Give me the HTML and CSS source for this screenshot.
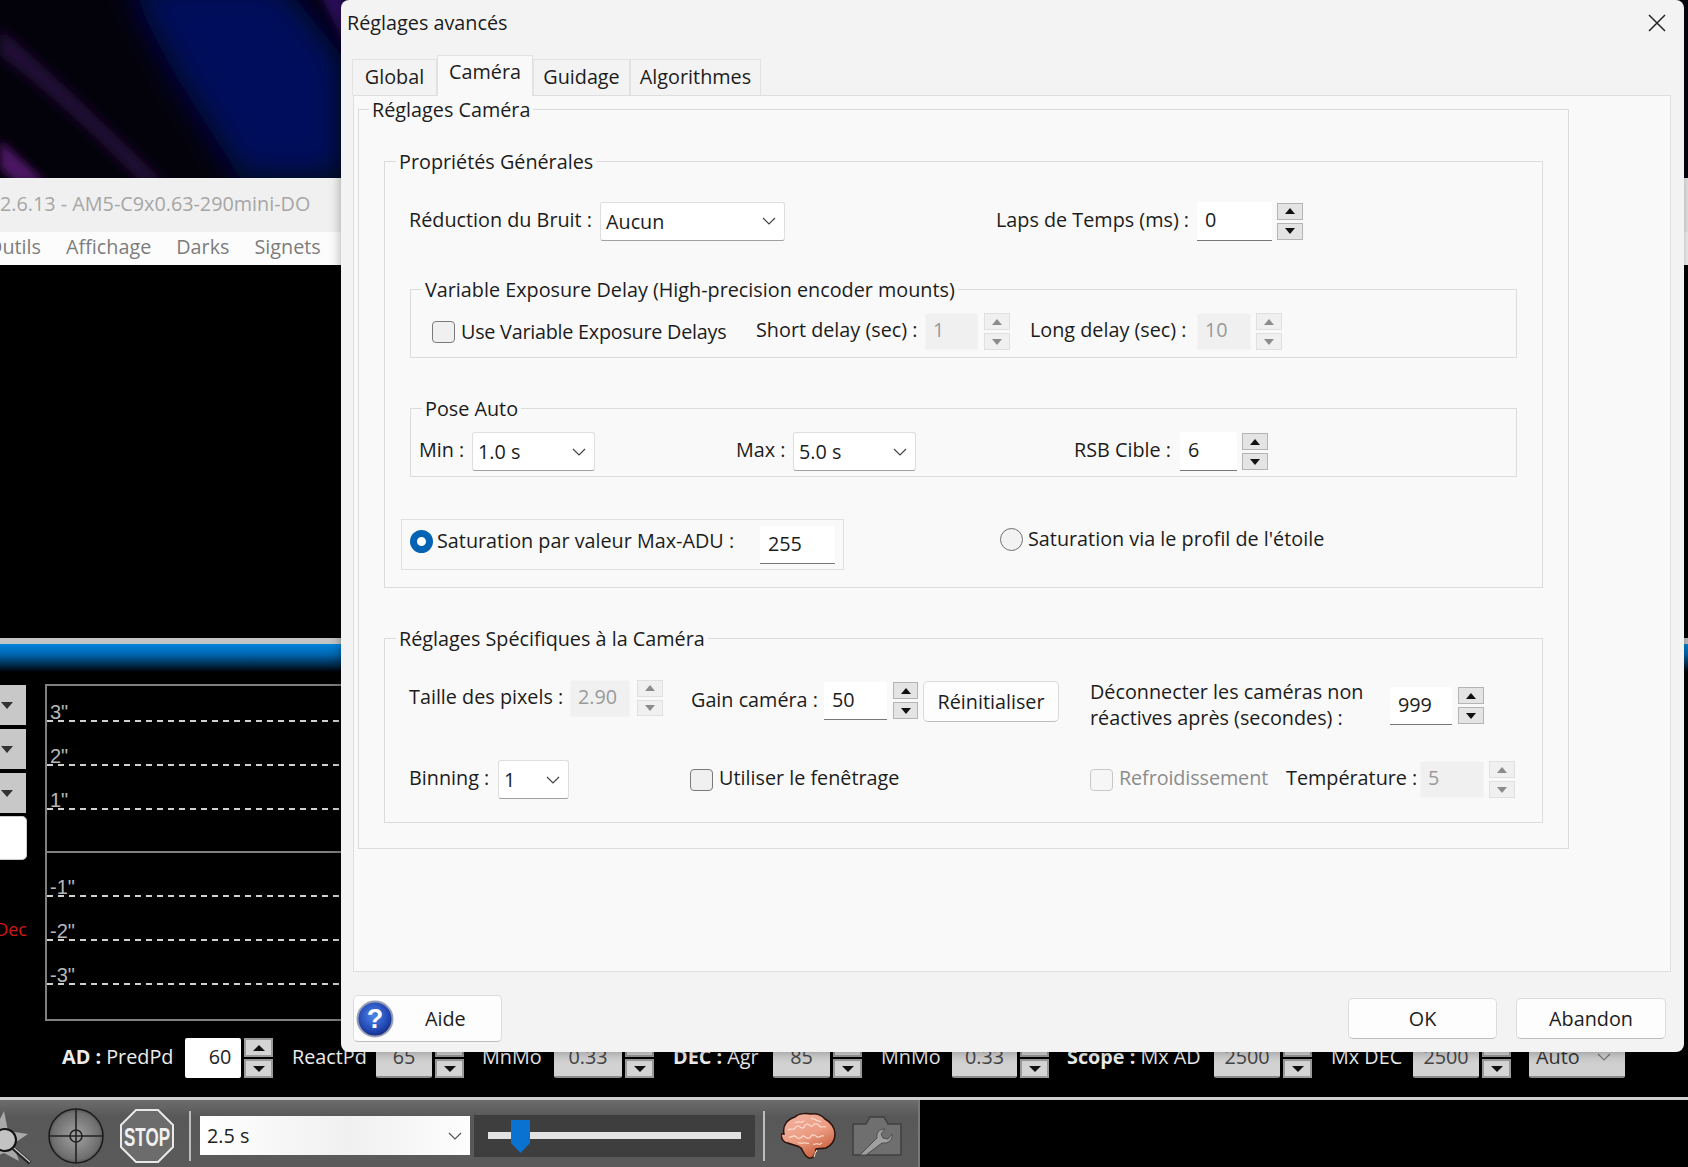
FILE: index.html
```html
<!DOCTYPE html>
<html lang="fr">
<head>
<meta charset="utf-8">
<title>Réglages avancés</title>
<link rel="stylesheet" href="styles.css">
</head>
<body>
<div class="desktop">
  <svg class="wallpaper" viewBox="0 0 345 178" preserveAspectRatio="none" aria-hidden="true">
    <defs>
      <filter id="b1" x="-30%" y="-30%" width="160%" height="160%"><feGaussianBlur stdDeviation="16"/></filter>
      <filter id="b2" x="-30%" y="-30%" width="160%" height="160%"><feGaussianBlur stdDeviation="6"/></filter>
      <filter id="b3" x="-30%" y="-30%" width="160%" height="160%"><feGaussianBlur stdDeviation="4"/></filter>
    </defs>
    <rect width="345" height="178" fill="#03020a"/>
    <path d="M130 -20 L280 -20 L345 60 L345 178 L240 178 C200 110 160 60 130 -20Z" fill="#030f5c" filter="url(#b1)"/>
    <path d="M318 -10 L345 -10 L350 40 L345 45Z" fill="#2a0a5a" filter="url(#b3)"/>
    <path d="M0 28 C50 70 110 130 165 182 L140 182 C90 130 40 85 0 56Z" fill="#220a38" filter="url(#b2)"/>
    <path d="M0 140 L46 182 L16 182 L0 168Z" fill="#4c1264" filter="url(#b3)"/>
  </svg>

  <div class="app">
    <div class="app-title">2.6.13 - AM5-C9x0.63-290mini-DO</div>
    <div class="app-menu"><span class="menu-first">Outils</span><span>Affichage</span><span>Darks</span><span>Signets</span></div>
    <div class="imagearea"></div>
    <div class="stripe"></div>
    <div class="blueband"></div>
    <div class="guider">
      <div class="sidectl">
        <div class="sidebtn"><i class="tri-down"></i></div>
        <div class="sidebtn"><i class="tri-down"></i></div>
        <div class="sidebtn"><i class="tri-down"></i></div>
        <div class="sidewhite"></div>
        <div class="dec">Dec</div>
      </div>
      <div class="graph">
        <div class="band b37 dashed"><span>3"</span></div>
        <div class="band b44 dashed"><span>2"</span></div>
        <div class="band b44 dashed"><span>1"</span></div>
        <div class="band b43 solid"></div>
        <div class="band b44 dashed"><span>-1"</span></div>
        <div class="band b44 dashed"><span>-2"</span></div>
        <div class="band b44 dashed"><span>-3"</span></div>
        <div class="band b36"></div>
      </div>
    </div>
    <div class="params">
      <span class="p-lab p-ad"><b>AD :</b> PredPd</span>
      <div class="p-field p-white p-60">60</div>
      <div class="p-spin"><i class="tri-up"></i><i class="tri-down"></i></div>
      <span class="p-lab p-react">ReactPd</span>
      <div class="p-field p-65">65</div>
      <div class="p-spin"><i class="tri-up"></i><i class="tri-down"></i></div>
      <span class="p-lab p-mn1">MnMo</span>
      <div class="p-field p-033">0.33</div>
      <div class="p-spin"><i class="tri-up"></i><i class="tri-down"></i></div>
      <span class="p-lab p-dec"><b>DEC :</b> Agr</span>
      <div class="p-field p-85">85</div>
      <div class="p-spin"><i class="tri-up"></i><i class="tri-down"></i></div>
      <span class="p-lab p-mn2">MnMo</span>
      <div class="p-field p-033b">0.33</div>
      <div class="p-spin"><i class="tri-up"></i><i class="tri-down"></i></div>
      <span class="p-lab p-scope"><b>Scope :</b> Mx AD</span>
      <div class="p-field p-2500">2500</div>
      <div class="p-spin"><i class="tri-up"></i><i class="tri-down"></i></div>
      <span class="p-lab p-mxdec">Mx DEC</span>
      <div class="p-field p-2500b">2500</div>
      <div class="p-spin"><i class="tri-up"></i><i class="tri-down"></i></div>
      <div class="p-auto">Auto<svg class="chev" viewBox="0 0 14 8"><path d="M1 1l6 6 6-6" fill="none" stroke="#777" stroke-width="1.2"/></svg></div>
    </div>
    <div class="sepline"></div>
    <div class="toolbar-row">
      <div class="toolbar">
        <svg class="ic-loop" viewBox="0 0 33 58" aria-hidden="true">
          <path d="M4 4l4 20 20 3-15 10 6 17-15-8-8 3V20z" fill="#a9a9a9"/>
          <circle cx="5" cy="33" r="11" fill="#d8d8d8" fill-opacity=".55" stroke="#111" stroke-width="2"/>
          <path d="M13 41l17 15" stroke="#222" stroke-width="4"/><path d="M14 41l16 14" stroke="#cfcfcf" stroke-width="1.2"/>
        </svg>
        <svg class="ic-guide" viewBox="0 0 56 56" aria-hidden="true">
          <defs><radialGradient id="gd" cx=".5" cy=".5" r=".55"><stop offset="0" stop-color="#a2a2a2"/><stop offset=".8" stop-color="#6e6e6e"/><stop offset="1" stop-color="#3e3e3e"/></radialGradient></defs>
          <circle cx="28" cy="28" r="27" fill="url(#gd)" stroke="#1c1c1c" stroke-width="1.5"/>
          <path d="M28 1v54M1 28h54" stroke="#222" stroke-width="1.6"/>
          <circle cx="28" cy="28" r="6" fill="none" stroke="#222" stroke-width="1.6"/>
        </svg>
        <svg class="ic-stop" viewBox="0 0 54 54" aria-hidden="true">
          <path d="M16 1h22l15 15v22L38 53H16L1 38V16z" fill="#6c6c6c" stroke="#e8e8e8" stroke-width="2"/>
          <text x="27" y="37" text-anchor="middle" class="stop-text" textLength="46" lengthAdjust="spacingAndGlyphs">STOP</text>
        </svg>
        <div class="tb-sep tb-sep1"></div>
        <div class="tb-select">2.5 s<svg class="chev" viewBox="0 0 14 8"><path d="M1 1l6 6 6-6" fill="none" stroke="#555" stroke-width="1.2"/></svg></div>
        <div class="slider">
          <div class="track"></div>
          <svg class="thumb" viewBox="0 0 19 33" aria-hidden="true"><path d="M1 0h17a1 1 0 0 1 1 1v22l-9.500 10L0 23V1a1 1 0 0 1 1-1z" fill="#0a72d0"/></svg>
        </div>
        <div class="tb-sep tb-sep2"></div>
        <svg class="ic-brain" viewBox="0 0 55 47" aria-hidden="true">
          <defs><linearGradient id="br" x1="0" y1="0" x2=".6" y2="1"><stop offset="0" stop-color="#f4b7a6"/><stop offset=".6" stop-color="#ea9a80"/><stop offset="1" stop-color="#c9603c"/></linearGradient></defs>
          <path d="M3 22C1 13 7 7 14 5c4-4 12-4 16-3 5-1 11 1 14 5 6 3 10 9 10 15 0 7-3 11-9 14-4 1-8 0-10 1 0 3-1 6-3 8-2 2-5 1-7-1-2-2-3-5-5-8-4-3-9-3-13-5-4 0-7-4-7-9z" fill="url(#br)" stroke="#2a120c" stroke-width="1.500"/>
          <path d="M7 18c2-2 4 0 6-1s1-3 4-3 2 3 5 2 1-4 4-4 3 3 5 2 2-3 5-2 2 3 4 3 3-1 5 0M8 25c2 1 4-2 6-1s2 3 5 2 2-3 4-2 2 3 5 2 2-4 5-3 3 3 5 2 3-2 5-1M14 10c2 1 3-1 5 0s3-1 4-1M30 6c2 2 3 0 5 2s3 0 5 2M17 31c2-1 3 1 5 0s3 1 6 0M32 32c2 1 3-1 5 0s2 0 4-1M36 38c-1 2-2 3-2 4s-1 2-1 3" fill="none" stroke="#fde3d6" stroke-width="1.100"/>
        </svg>
        <svg class="ic-cam" viewBox="0 0 50 40" aria-hidden="true">
          <path d="M1 8h13l4-7h14l4 7h13v31H1z" fill="#6f6f6f" stroke="#3f3f3f" stroke-width="1.500"/>
          <path d="M8 39l17-17c-1-5 2-9 8-9l-4 5 2 4 5 1 4-5c1 6-4 10-10 9L14 39z" fill="#a0a0a0" stroke="#4c4c4c"/>
        </svg>
      </div>
    </div>
  </div>

  <div class="dialog">
    <div class="dlg-title">
      <span>Réglages avancés</span>
      <svg class="dlg-close" viewBox="0 0 18 18" aria-hidden="true"><path d="M1 1l16 16M17 1L1 17" stroke="#222" stroke-width="1.500" fill="none"/></svg>
    </div>
    <div class="tabs">
      <div class="tab tab-global">Global</div>
      <div class="tab tab-on">Caméra</div>
      <div class="tab tab-guide">Guidage</div>
      <div class="tab tab-algo">Algorithmes</div>
    </div>
    <div class="pane">
      <fieldset class="grp grp-outer">
        <legend>Réglages Caméra</legend>

        <fieldset class="grp grp-gen">
          <legend>Propriétés Générales</legend>
          <div class="row row-noise">
            <span class="lab w-noise">Réduction du Bruit :</span>
            <div class="combo c-noise">Aucun<svg class="chev" viewBox="0 0 14 8"><path d="M1 1l6 6 6-6"/></svg></div>
            <span class="lab w-laps">Laps de Temps (ms) :</span>
            <div class="field f-laps">0</div>
            <div class="spin s-ml5"><i class="tri-up"></i><i class="tri-down"></i></div>
          </div>

          <fieldset class="grp grp-sub grp-var">
            <legend>Variable Exposure Delay (High-precision encoder mounts)</legend>
            <div class="row row-var">
              <div class="check w-usevar"><i class="box"></i><span>Use Variable Exposure Delays</span></div>
              <span class="lab w-short">Short delay (sec) :</span>
              <div class="field off f-short">1</div>
              <div class="spin off s-ml6"><i class="tri-up"></i><i class="tri-down"></i></div>
              <span class="lab w-long">Long delay (sec) :</span>
              <div class="field off f-long">10</div>
              <div class="spin off s-ml5"><i class="tri-up"></i><i class="tri-down"></i></div>
            </div>
          </fieldset>

          <fieldset class="grp grp-sub grp-pose">
            <legend>Pose Auto</legend>
            <div class="row row-pose">
              <span class="lab w-min">Min :</span>
              <div class="combo c-pose">1.0 s<svg class="chev" viewBox="0 0 14 8"><path d="M1 1l6 6 6-6"/></svg></div>
              <span class="lab w-max">Max :</span>
              <div class="combo c-pose">5.0 s<svg class="chev" viewBox="0 0 14 8"><path d="M1 1l6 6 6-6"/></svg></div>
              <span class="lab w-rsb">RSB Cible :</span>
              <div class="field f-rsb">6</div>
              <div class="spin s-ml5"><i class="tri-up"></i><i class="tri-down"></i></div>
            </div>
          </fieldset>

          <div class="row row-sat">
            <div class="satbox">
              <i class="radio on"></i>
              <span class="lab w-sat">Saturation par valeur Max-ADU :</span>
              <div class="field f-sat">255</div>
            </div>
            <div class="sat2"><i class="radio"></i><span class="lab">Saturation via le profil de l'étoile</span></div>
          </div>
        </fieldset>

        <fieldset class="grp grp-spec">
          <legend>Réglages Spécifiques à la Caméra</legend>
          <div class="row row-a">
            <span class="lab w-taille">Taille des pixels :</span>
            <div class="field off f-taille">2.90</div>
            <div class="spin off s-taille"><i class="tri-up"></i><i class="tri-down"></i></div>
            <span class="lab w-gain">Gain caméra :</span>
            <div class="field f-gain">50</div>
            <div class="spin s-gain"><i class="tri-up"></i><i class="tri-down"></i></div>
            <div class="btn b-reinit">Réinitialiser</div>
            <span class="lab w-deco">Déconnecter les caméras non<br>réactives après (secondes) :</span>
            <div class="field f-deco">999</div>
            <div class="spin s-deco"><i class="tri-up"></i><i class="tri-down"></i></div>
          </div>
          <div class="row row-b">
            <span class="lab w-bin">Binning :</span>
            <div class="combo c-bin">1<svg class="chev" viewBox="0 0 14 8"><path d="M1 1l6 6 6-6"/></svg></div>
            <div class="check w-fen"><i class="box"></i><span>Utiliser le fenêtrage</span></div>
            <div class="check off w-ref"><i class="box"></i><span>Refroidissement</span></div>
            <span class="lab w-temp">Température :</span>
            <div class="field off f-temp">5</div>
            <div class="spin off s-ml5 s-temp"><i class="tri-up"></i><i class="tri-down"></i></div>
          </div>
        </fieldset>
      </fieldset>
    </div>
    <div class="dlg-foot">
      <div class="btn b-aide">
        <svg class="ic-help" viewBox="0 0 38 38" aria-hidden="true">
          <defs><radialGradient id="hp" cx=".45" cy=".4" r=".65"><stop offset="0" stop-color="#4f86ea"/><stop offset=".7" stop-color="#1f44b0"/><stop offset="1" stop-color="#16246a"/></radialGradient></defs>
          <circle cx="19" cy="19" r="17.500" fill="url(#hp)" stroke="#9aa0b4" stroke-width="2"/>
          <text x="19" y="28" text-anchor="middle" class="help-text">?</text>
        </svg>
        <span class="aide-text">Aide</span>
      </div>
      <div class="btn b-ok">OK</div>
      <div class="btn b-cancel">Abandon</div>
    </div>
  </div>
</div>
</body>
</html>
```

FILE: styles.css
```css
* { box-sizing: border-box; }
html, body { margin: 0; padding: 0; background: #000; }
body { font-family: "Open Sans", "Noto Sans", sans-serif; font-size: 19.8px; color: #1c1c1c; }
i { display: block; }

.desktop { position: relative; width: 1688px; height: 1167px; overflow: hidden; background: #05030c; }
.wallpaper { position: absolute; left: 0; top: 0; width: 345px; height: 178px; display: block; }

/* background application window */
.app { position: absolute; left: 0; top: 178px; width: 1688px; height: 989px; display: flex; flex-direction: column; background: #000; }
.app-title { height: 54px; line-height: 52px; background: #f0f0f0; color: #a6a6a6; white-space: nowrap; overflow: hidden; }
.app-menu { height: 33px; line-height: 30px; background: #fcfcfc; color: #7c7c7c; display: flex; gap: 25px; overflow: hidden; white-space: nowrap; }
.menu-first { margin-left: -13px; }
.imagearea { height: 373px; background: #000; flex: none; }
.stripe { height: 6px; background: #c4c4c4; flex: none; }
.blueband { height: 28px; flex: none; background: linear-gradient(#0084dc, #0069b4 35%, #001a30 85%, #000); }

.guider { display: flex; padding-top: 12px; flex: none; height: 349px; }
.sidectl { width: 45px; flex: none; display: flex; flex-direction: column; overflow: hidden; }
.sidebtn { width: 26px; height: 40px; background: #c8c8c8; margin: 1px 0 3px; display: flex; align-items: center; padding-left: 1px; }
.sidewhite { width: 27px; height: 44px; background: #fff; border: 1px solid #ccc; border-left: 0; border-radius: 0 5px 5px 0; }
.dec { width: 27px; margin-top: 57px; color: #d01818; font-size: 18px; line-height: 24px; display: flex; justify-content: flex-end; overflow: hidden; }
.graph { width: 400px; height: 337px; border: solid #808080; border-width: 2px 0 2px 2px; display: flex; flex-direction: column; flex: none; }
.band { flex: none; display: flex; align-items: flex-end; padding-left: 3px; color: #b8b8b8; font-family: "Liberation Sans", sans-serif; font-size: 20px; line-height: 22px; }
.band span { margin-bottom: -1px; }
.dashed { background: repeating-linear-gradient(90deg, #d0d0d0 0 6px, transparent 6px 11px) left bottom / 100% 2px no-repeat; }
.solid { border-bottom: 2px solid #808080; }
.b37 { height: 36px; } .b44 { height: 44px; } .b43 { height: 43px; } .b36 { height: 35px; }

.params { height: 76px; padding-top: 17px; flex: none; display: flex; align-items: flex-start; color: #ececec; white-space: nowrap; }
.p-lab { line-height: 38px; flex: none; }
.p-lab b { font-weight: 700; }
.p-field { height: 40px; line-height: 38px; background: #d2d2d2; color: #444; text-align: center; flex: none; border-radius: 2px; border-bottom: 2px solid #8a8a8a; }
.p-white { background: #fff; color: #222; border: 0; }
.p-spin { width: 29px; height: 40px; margin-left: 3px; display: flex; flex-direction: column; gap: 2px; flex: none; }
.p-spin i { height: 19px; background: #d4d4d4; border: 2px solid #9a9a9a; display: flex; align-items: center; justify-content: center; }
.p-ad { margin-left: 62px; width: 123px; }
.p-60 { width: 56px; padding-left: 14px; }
.p-react { margin-left: 19px; width: 84px; }
.p-65 { width: 56px; }
.p-mn1 { margin-left: 18px; width: 72px; }
.p-033 { width: 68px; }
.p-dec { margin-left: 19px; width: 100px; }
.p-85 { width: 57px; }
.p-mn2 { margin-left: 19px; width: 71px; }
.p-033b { width: 65px; }
.p-scope { margin-left: 18px; width: 147px; }
.p-2500 { width: 66px; }
.p-mxdec { margin-left: 19px; width: 82px; }
.p-2500b { width: 66px; }
.p-auto { margin-left: 18px; width: 96px; height: 40px; line-height: 38px; padding-left: 7px; background: #d0d0d0; color: #333; border-bottom: 2px solid #8a8a8a; border-radius: 2px; display: flex; justify-content: space-between; align-items: center; flex: none; }
.p-auto .chev { margin-right: 14px; }

.sepline { height: 3px; background: #cfcfcf; flex: none; }
.toolbar-row { flex: 1; display: flex; }
.toolbar { width: 920px; border-right: 2px solid #777; padding-top: 4px; background: linear-gradient(#6c6c6c, #585858 25%, #5a5a5a); display: flex; align-items: center; flex: none; }
.ic-loop { width: 33px; height: 58px; flex: none; }
.ic-guide { width: 56px; height: 56px; margin-left: 15px; flex: none; }
.ic-stop { width: 54px; height: 54px; margin-left: 16px; flex: none; }
.stop-text { font-family: "Liberation Sans", sans-serif; font-weight: 700; font-size: 26px; fill: #f0f0f0; }
.tb-sep { width: 2px; height: 50px; background: #bdbdbd; flex: none; }
.tb-sep1 { margin-left: 15px; }
.tb-select { width: 270px; height: 39px; margin-left: 9px; padding-left: 7px; line-height: 37px; background: linear-gradient(90deg, #fff, #f0f0f0 55%, #fdfdfd); color: #222; display: flex; justify-content: space-between; align-items: center; flex: none; }
.tb-select .chev { margin-right: 8px; }
.slider { width: 281px; height: 42px; margin-left: 4px; background: #3e3e3e; display: flex; align-items: center; padding-left: 14px; flex: none; position: relative; }
.track { width: 253px; height: 7px; background: #e2e2e2; }
.thumb { position: absolute; left: 37px; top: 5px; width: 19px; height: 33px; }
.tb-sep2 { margin-left: 8px; }
.ic-brain { width: 55px; height: 47px; margin-left: 16px; flex: none; }
.ic-cam { width: 50px; height: 40px; margin-left: 16px; flex: none; }

/* dialog */
.dialog { position: absolute; left: 341px; top: 0; width: 1343px; height: 1052px; background: #f3f3f3; border-radius: 8px; box-shadow: 0 0 12px rgba(0,0,0,.35); display: flex; flex-direction: column; }
.dlg-title { height: 55px; flex: none; display: flex; justify-content: space-between; align-items: flex-start; padding: 10px 18px 0 6px; line-height: 26px; }
.dlg-close { width: 18px; height: 18px; margin-top: 4px; }
.tabs { height: 40px; flex: none; display: flex; align-items: flex-end; margin-left: 11px; }
.tab { height: 36px; line-height: 33px; text-align: center; background: #f3f3f3; border: 1px solid #e2e2e2; border-bottom: 0; flex: none; }
.tab-global { width: 85px; }
.tab-on { width: 96px; height: 41px; line-height: 31px; background: #f9f9f9; margin-bottom: -1px; position: relative; z-index: 1; }
.tab-guide { width: 97px; }
.tab-algo { width: 131px; }
.pane { width: 1318px; height: 877px; margin-left: 12px; flex: none; background: #f9f9f9; border: 1px solid #dedede; padding: 1px 0 0 4px; }
.dlg-foot { flex: 1; display: flex; align-items: flex-start; padding: 23px 0 0 12px; }

.grp { margin: 0; padding: 0; border: 1px solid #dcdcdc; min-width: 0; }
.grp legend { padding: 0 3px; line-height: 26px; height: 24px; white-space: nowrap; }
.grp-outer { width: 1211px; height: 752px; }
.grp-outer > legend { margin-left: 10px; }
.grp-gen { width: 1159px; height: 439px; margin: 28px 0 0 25px; }
.grp-gen > legend { margin-left: 11px; }
.grp-spec { width: 1159px; height: 197px; margin: 38px 0 0 25px; }
.grp-spec > legend { margin-left: 11px; }
.grp-sub { width: 1107px; height: 81px; margin-left: 25px; }
.grp-sub > legend { margin-left: 11px; }
.grp-var { margin-top: 36px; }
.grp-pose { margin-top: 38px; }

.row { display: flex; align-items: center; }
.lab { flex: none; line-height: 24px; white-space: nowrap; }
.row-noise { margin-top: 28px; padding-left: 24px; height: 40px; }
.row-noise .lab { margin-bottom: 2px; }
.w-noise { width: 191px; }
.w-laps { width: 201px; margin-left: 211px; }
.row-var { margin-top: 12px; padding-left: 21px; height: 37px; }
.w-usevar { width: 324px; letter-spacing: -.25px; }
.w-short { width: 169px; margin-bottom: 3px; }
.w-long { width: 167px; margin-left: 20px; margin-bottom: 3px; }
.row-pose { margin-top: 12px; padding-left: 8px; height: 39px; }
.row-pose .lab { margin-bottom: 4px; }
.w-min { width: 53px; }
.w-max { width: 57px; margin-left: 141px; }
.w-rsb { width: 106px; margin-left: 158px; }
.row-sat { margin: 42px 0 0 16px; align-items: flex-start; }
.satbox { width: 443px; height: 51px; border: 1px solid #e0e0e0; padding-left: 8px; display: flex; align-items: center; flex: none; }
.satbox .radio { margin-bottom: 6px; }
.w-sat { width: 323px; margin: 0 0 8px 4px; }
.sat2 { margin: 8px 0 0 156px; display: flex; align-items: center; gap: 5px; }

.row-a { margin-top: 30px; padding-left: 24px; height: 45px; align-items: flex-start; }
.w-taille { width: 161px; margin-top: 5px; }
.w-gain { width: 133px; margin: 8px 0 0 28px; }
.w-deco { width: 300px; margin-left: 31px; line-height: 26px; margin-top: -1px; }
.row-b { margin-top: 35px; padding-left: 24px; height: 39px; }
.row-b .lab, .row-b .check span { margin-bottom: 3px; }
.w-bin { width: 89px; }
.w-fen { width: 400px; margin-left: 121px; }
.w-ref { width: 196px; gap: 4px; letter-spacing: -.1px; }
.w-temp { width: 134px; }

.field { height: 39px; line-height: 35px; background: #fff; border-bottom: 1.5px solid #777; border-radius: 3px 3px 0 0; padding-left: 8px; flex: none; }
.field.off { background: #f0f0f0; border: 1px solid #f4f4f4; color: #9a9a9a; height: 37px; line-height: 32px; padding-left: 7px; }
.f-laps { width: 75px; }
.f-short { width: 53px; }
.f-long { width: 54px; }
.f-rsb { width: 57px; }
.f-sat { width: 75px; height: 38px; }
.f-taille { width: 60px; height: 36px; }
.f-gain { width: 63px; height: 38px; margin-top: 2px; }
.f-deco { width: 62px; height: 38px; margin-top: 7px; }
.f-temp { width: 64px; }

.spin { width: 26px; height: 37px; display: flex; flex-direction: column; gap: 3px; flex: none; }
.spin i { flex: 1; background: #e4e4e4; border: 1px solid #b4b4b4; display: flex; align-items: center; justify-content: center; }
.spin.off i { background: #f0f0f0; border-color: #e0e0e0; }
.s-ml5 { margin-left: 5px; }
.s-ml6 { margin-left: 6px; }
.s-taille { margin-left: 7px; height: 36px; }
.s-gain { margin: 2px 0 0 6px; width: 25px; }
.s-deco { margin: 7px 0 0 6px; }
.tri-up::before { content: ""; border: 5px solid transparent; border-top: 0; border-bottom: 6px solid #111; }
.tri-down::before { content: ""; border: 5px solid transparent; border-bottom: 0; border-top: 6px solid #111; }
.off .tri-up::before { border-bottom-color: #8c8c8c; }
.off .tri-down::before { border-top-color: #8c8c8c; }
.sidebtn .tri-down::before { display: block; border-width: 7px 6px 0; border-top-color: #333; }
.p-spin .tri-up::before, .p-spin .tri-down::before { border-left-width: 6px; border-right-width: 6px; }

.combo { height: 39px; line-height: 35px; padding: 0 8px 0 5px; background: #fff; border: 1px solid #dedede; border-bottom: 1.5px solid #a0a0a0; border-radius: 3px; display: flex; justify-content: space-between; align-items: center; flex: none; }
.chev { width: 14px; height: 8px; flex: none; }
.combo .chev path { fill: none; stroke: #444; stroke-width: 1.2; }
.c-noise { width: 185px; }
.c-pose { width: 123px; }
.c-bin { width: 71px; }

.check { display: flex; align-items: center; gap: 6px; flex: none; white-space: nowrap; line-height: 24px; }
.box { width: 23px; height: 22px; background: #f0f0f0; border: 1.5px solid #7a7a7a; border-radius: 4px; flex: none; }
.check.off { color: #8c8c8c; }
.check.off .box { border-color: #c8c8c8; background: #f6f6f6; }
.radio { width: 23px; height: 23px; border: 1.5px solid #6e6e6e; border-radius: 50%; background: #f2f2f2; flex: none; }
.radio.on { border: 7px solid #0563b4; background: #fff; }

.btn { height: 41px; line-height: 39px; background: #fdfdfd; border: 1px solid #dcdcdc; border-bottom-color: #bdbdbd; border-radius: 5px; text-align: center; flex: none; }
.b-reinit { width: 136px; margin: 1px 0 0 5px; }
.b-aide { width: 149px; height: 47px; display: flex; align-items: center; padding-left: 2px; }
.ic-help { width: 38px; height: 38px; flex: none; }
.help-text { font-family: "Liberation Sans", sans-serif; font-weight: 700; font-size: 27px; fill: #fff; }
.aide-text { margin-left: 31px; }
.b-ok { width: 149px; margin: 3px 0 0 846px; }
.b-cancel { width: 150px; margin: 3px 0 0 19px; }
```
